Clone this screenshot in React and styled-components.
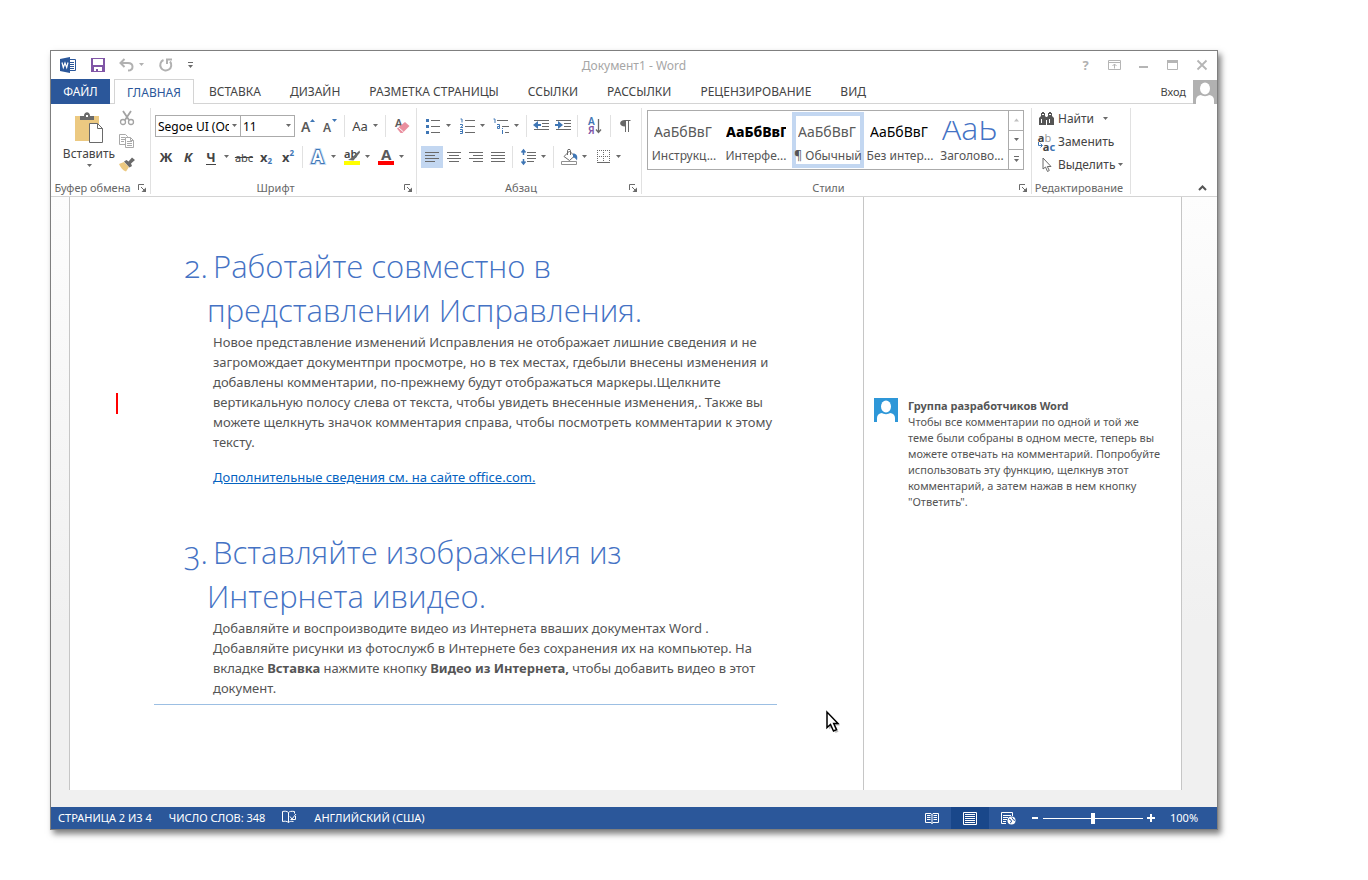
import React from 'react'
import styled, { createGlobalStyle, css } from 'styled-components';
import { useState } from 'react';

const tabs = ['ВСТАВКА', 'ДИЗАЙН', 'РАЗМЕТКА СТРАНИЦЫ', 'ССЫЛКИ', 'РАССЫЛКИ', 'РЕЦЕНЗИРОВАНИЕ', 'ВИД'];

const styleCells = [
    { name: 'Инструкц...', sample: 'АаБбВвГ', kind: 'plain' },
    { name: 'Интерфе...', sample: 'АаБбВвГ', kind: 'bold' },
    { name: '¶ Обычный', sample: 'АаБбВвГ', kind: 'plain' },
    { name: 'Без интер...', sample: 'АаБбВвГ', kind: 'dark' },
    { name: 'Заголово...', sample: 'АаЬ', kind: 'title' },
];

const GREY = '#6a6a6a';
const BLUE = '#3f76b5';

/* ---------- icons ---------- */

const Svg = ({ w = 16, h = 16, children }) => (
    <svg width={w} height={h} viewBox={`0 0 ${w} ${h}`} fill="none" aria-hidden="true">{children}</svg>
)

const Caret = ({ color = GREY }) => (
    <Svg w={7} h={4}><path d="M1 0h5L3.5 3z" fill={color} /></Svg>
)

const WordIcon = () => (
    <Svg w={17} h={16}>
        <path d="M9 2.5h6.500v11H9z" fill="#fff" stroke="#2b579a" />
        <path d="M10 5.5h4M10 7.5h4M10 9.5h4M10 11.5h4" stroke="#2b579a" />
        <path d="M0 2l10-2v16L0 14z" fill="#2b579a" />
        <path d="M2 5.500l1.300 5L5 6l1.700 4.500L8 5.500" stroke="#fff" strokeWidth="1.200" />
    </Svg>
)

const SaveIcon = () => (
    <Svg w={14} h={14}>
        <path d="M0 0h14v14H0z" fill="#8055a6" />
        <path d="M2 1h10v6H2zM3 9h8v4H3z" fill="#fff" />
        <path d="M5 11h2v3H5z" fill="#8055a6" />
    </Svg>
)

const UndoIcon = () => (
    <Svg w={15} h={14}>
        <path d="M2 5h7c3 0 4.500 1.600 4.500 3.700 0 2.300-1.800 3.800-4.500 3.800" stroke="#b1b1b1" strokeWidth="2" />
        <path d="M5.500 1L1.500 5l4 4" stroke="#b1b1b1" strokeWidth="2" />
    </Svg>
)

const RedoIcon = () => (
    <Svg w={14} h={14}>
        <path d="M4.500 2A5.500 5.500 0 1 0 11 3.500" stroke="#b1b1b1" strokeWidth="2" />
        <path d="M8 6V1.500h5" stroke="#b1b1b1" strokeWidth="2" />
    </Svg>
)

const MoreIcon = ({ color = GREY }) => (
    <Svg w={7} h={7}><path d="M1 .5h5" stroke={color} /><path d="M1 3h5L3.500 6z" fill={color} /></Svg>
)

const PersonIcon = ({ bg, size = 24 }) => (
    <svg width={size} height={size} viewBox="0 0 24 24" aria-hidden="true">
        <path d="M0 0h24v24H0z" fill={bg} />
        <ellipse cx="12" cy="8.500" rx="5" ry="6" fill="#fff" />
        <path d="M3 24v-4c0-3 2-4.500 5-5 1.500 1.500 6.500 1.500 8 0 3 .5 5 2 5 5v4z" fill="#fff" />
    </svg>
)

const PasteIcon = () => (
    <Svg w={29} h={31}>
        <path d="M0 4h24v25H0z" fill="#ecc981" />
        <path d="M5 8V4h4c0-5 6-5 6 0h4v4z" fill={GREY} />
        <path d="M11 3h2v2h-2z" fill="#fff" />
        <path d="M14.500 11.500h8l5 5v14h-13z" fill="#fff" stroke={GREY} />
        <path d="M22.500 11.500v5h5" stroke={GREY} />
    </Svg>
)

const CutIcon = () => (
    <Svg>
        <path d="M4 1l6 9M12 1L6 10" stroke="#a3a3a3" strokeWidth="1.800" />
        <circle cx="4" cy="12" r="2.500" stroke="#a3a3a3" strokeWidth="1.300" />
        <circle cx="12" cy="12" r="2.500" stroke="#a3a3a3" strokeWidth="1.300" />
    </Svg>
)

const CopyIcon = () => (
    <Svg>
        <path d="M.5 1.500h6l2 2v8h-8z" fill="#fff" stroke="#a9a9a9" />
        <path d="M2 4.500h4M2 6.500h4M2 8.500h3" stroke="#a9a9a9" />
        <path d="M6.500 4.500h5l3 3v7h-8z" fill="#fff" stroke="#a9a9a9" />
        <path d="M11.500 4.500v3h3M8 8.500h5M8 10.500h5M8 12.500h5" stroke="#a9a9a9" />
    </Svg>
)

const BrushIcon = () => (
    <Svg>
        <path d="M0 8l5-2 5 5-3 4.500C4 14.500 1.500 11.500 0 8z" fill="#ecc981" />
        <path d="M5 5.500L7.500 4l2 1.500L13 1.500 16 4l-4 3.500L13 10l-2.500 1.500z" fill={GREY} />
    </Svg>
)

const FontSizeIcon = ({ up }) => (
    <Svg w={16} h={16}>
        <Glyph x="1" y="14" $size={up ? 14 : 12} $weight={600}>A</Glyph>
        <path d={up ? 'M10 4h5l-2.500-3z' : 'M10 1h5l-2.500 3z'} fill={BLUE} />
    </Svg>
)

const EraserIcon = () => (
    <Svg>
        <Glyph x="1" y="9" $size={11} $weight={600}>A</Glyph>
        <path d="M3 10.500L11 4l4.500 4-7 7H6.500z" fill="#ea8f9f" />
        <path d="M4.500 9.500l5 4.500" stroke="#fff" />
    </Svg>
)

const TextFxIcon = () => (
    <Svg>
        <Glyph x="2" y="14" $size={17} $weight={600} stroke="#c6daf3" strokeWidth="4">A</Glyph>
        <Glyph x="2" y="14" $size={17} $weight={600} stroke={BLUE} strokeWidth="2">A</Glyph>
        <Glyph x="2" y="14" $size={17} $weight={600} $color="#fff">A</Glyph>
    </Svg>
)

const HighlightIcon = () => (
    <Svg>
        <path d="M0 12h16v4H0z" fill="#ff0" />
        <Glyph x="0" y="9" $size={11} $weight={600} $color="#444">ab</Glyph>
        <path d="M15.500 1.500L8 8.500l-4 2.500 5.500.5L16 3.500z" fill={GREY} />
    </Svg>
)

const FontColorIcon = () => (
    <Svg>
        <Glyph x="3" y="11" $size={15} $weight={700}>A</Glyph>
        <path d="M0 12h16v4H0z" fill="red" />
    </Svg>
)

const BulletsIcon = () => (
    <Svg w={14}>
        <path d="M0 1h3v3H0zM0 7h3v3H0zM0 13h3v3H0z" fill={BLUE} />
        <path d="M5 2.500h9M5 8.500h9M5 14.500h9" stroke={GREY} />
    </Svg>
)

const NumbersIcon = () => (
    <Svg w={15}>
        <path d="M.5 1H2v3.500M0 6.500h2.500v1.500L.5 9.500H3M0 11.500h2.500v4H0M0 13.500h2.500" stroke={BLUE} />
        <path d="M5 2.500h10M5 8.500h10M5 14.500h10" stroke={GREY} />
    </Svg>
)

const MultiIcon = () => (
    <Svg w={17}>
        <path d="M.5 1H2v4M4 6.500h2.500v4H4.500v-2h2M9.500 10v1M9.500 12v4" stroke={BLUE} />
        <path d="M4 2.500h11M9 8.500h7M12 14.500h4" stroke={GREY} />
    </Svg>
)

const IndentIcon = ({ right }) => (
    <Svg w={17} h={14}>
        <path d="M1 1.500h15M9 4.500h7M9 7.500h7M1 10.500h15" stroke={GREY} />
        <path d={right ? 'M0 5h3V2l5 4-5 4V7H0z' : 'M8 5H5V2L0 6l5 4V7h3z'} fill={BLUE} />
    </Svg>
)

const SortIcon = () => (
    <Svg w={15} h={18}>
        <Glyph x="1" y="8" $size={10} $weight={600} $color={BLUE}>А</Glyph>
        <Glyph x="1" y="17" $size={10} $weight={600} $color="#8055a6">Я</Glyph>
        <path d="M11.500 2v13M9 12.500l2.500 3 2.500-3" stroke={GREY} strokeWidth="1.300" />
    </Svg>
)

const PilcrowIcon = () => (
    <Svg w={12} h={14}>
        <path d="M5.500 1.500h6M6.500 1v12M9.500 1v12" stroke={GREY} />
        <path d="M6 1C-.5 1-.5 7.500 6 7.500z" fill={GREY} />
    </Svg>
)

const alignLines = {
    left: 'M0 1.500h14M0 4.500h10M0 7.500h14M0 10.500h10',
    center: 'M0 1.500h14M2 4.500h10M0 7.500h14M2 10.500h10',
    right: 'M0 1.500h14M4 4.500h10M0 7.500h14M4 10.500h10',
    justify: 'M0 1.500h14M0 4.500h14M0 7.500h14M0 10.500h14',
};

const AlignIcon = ({ kind }) => (
    <Svg w={14} h={12}><path d={alignLines[kind]} stroke={GREY} /></Svg>
)

const SpacingIcon = () => (
    <Svg w={15}>
        <path d="M2.500 1v5M.5 3.500l2-2.500 2 2.500M2.500 10v5M.5 12.500l2 2.500 2-2.500" stroke={BLUE} strokeWidth="1.500" />
        <path d="M6 3.500h9M6 6.500h9M6 9.500h9M6 12.500h7" stroke={GREY} />
    </Svg>
)

const ShadingIcon = () => (
    <Svg w={17} h={16}>
        <path d="M3 7.500L8.500 2l5 5-5 4.500z" stroke={GREY} />
        <path d="M6.500 6V1.500c0-1.500 3-1.500 3 0V6" stroke={GREY} />
        <path d="M12 4.500c3.500 0 5 2 4 7-1-1-1.500-3-4-3z" fill={BLUE} />
        <path d="M.5 12.500h15v3H.5z" fill="#fff" stroke="#909090" />
    </Svg>
)

const BordersIcon = () => (
    <Svg w={13} h={14}>
        <path d="M.5 0v12M6.500 0v12M12.500 0v12M0 .5h13M0 6.500h13" stroke={GREY} strokeDasharray="1 1" />
        <path d="M0 12.500h13" stroke={GREY} />
    </Svg>
)

const LauncherIcon = () => (
    <Svg w={8} h={8}>
        <path d="M.5 6V.5H6M3 3l4 4" stroke={GREY} />
        <path d="M8 3.500V8H3.500z" fill={GREY} />
    </Svg>
)

const FindIcon = () => (
    <Svg w={15} h={13}>
        <path d="M2 1h1V0h2v1h1v3l1 1v8H0V6l2-2zM9 1h1V0h2v1h1v3l2 2v7H8V5l1-1z" fill="#555" />
        <path d="M6 5h3v3H6z" fill="#555" />
        <path d="M2.500 7v4M10.500 7v4M3 2.500h2M10 2.500h2" stroke="#fff" />
    </Svg>
)

const SwapArrow = () => (
    <Svg w={5} h={6}><path d="M.5 0v3.500H4M2.500 1.500l2 2-2 2" stroke={BLUE} /></Svg>
)

const PointerIcon = () => (
    <Svg w={10} h={15}>
        <path d="M1 1v11l2.500-2 2 4.500 1.800-1-2-4H9z" fill="#fff" stroke={GREY} />
    </Svg>
)

const BookCheckIcon = () => (
    <Svg w={15} h={14}>
        <path d="M6.500 2.500C5 1 2.500 1 .5 1.500v10c2-.5 4.500-.5 6 1 1-1 2.500-1.500 5-1M6.500 2.500v10M6.500 2.500c1-1 2.500-1.500 6-1v2" stroke="#fff" />
        <path d="M8 6.500l2 2.500 4-5M8.500 9.500h5V6" stroke="#fff" />
    </Svg>
)

const ReadIcon = () => (
    <Svg w={14} h={13}>
        <path d="M.5 1.500h5.500l1 1 1-1h5.500v9H8l-1 1-1-1H.5zM7 2v10" stroke="#fff" />
        <path d="M2 3.500h3.500M2 5.500h3.500M2 7.500h3.500M8.500 3.500H12M8.500 5.500H12M8.500 7.500H12" stroke="#fff" />
    </Svg>
)

const PrintLayoutIcon = () => (
    <Svg w={14} h={13}>
        <path d="M.5.5h13v12H.5zM2 2.500h10M2 4.500h10M2 6.500h10M2 8.500h10M2 10.500h10" stroke="#fff" />
    </Svg>
)

const WebLayoutIcon = () => (
    <Svg w={15} h={13}>
        <path d="M5 11.500H.5V.5h11V4M2 3.500h8M2 5.500h5M2 7.500h4M2 9.500h3" stroke="#fff" />
        <circle cx="10.500" cy="8.500" r="4" fill="#fff" />
        <path d="M8 7l2 1 .5 2-1.500 1M11 5.500l1 2 2 1" stroke="#2b579a" />
    </Svg>
)

const MouseCursor = () => (
    <Svg w={18} h={26}>
        <path d="M2 2v15.500l3.500-3 3 6.500 3-1.300-2.800-6.200H13z" fill="#000" opacity=".25" transform="translate(2 2)" />
        <path d="M2 2v15.500l3.500-3 3 6.500 3-1.300-2.800-6.200H13z" fill="#fff" stroke="#000" strokeWidth="1.500" />
    </Svg>
)

/* ---------- parts ---------- */

const SplitTool = ({ label, children }) => (
    <Split aria-label={label}><SplitFace>{children}</SplitFace><Caret /></Split>
)

const ComboBox = ({ label, value, wide }) => {
    const [text, setText] = useState(value);
    return (
        <Combo $wide={wide}>
            <ComboInput aria-label={label} value={text} onChange={e => setText(e.target.value)} />
            <ComboButton aria-label={`${label}: список`}><Caret /></ComboButton>
        </Combo>
    )
}

const GroupFooter = ({ children, launcher = true }) => (
    <Footer>
        <FooterText>{children}</FooterText>
        {launcher && <Launcher aria-label={`Параметры: ${children}`}><LauncherIcon /></Launcher>}
    </Footer>
)

const TitleBar = () => (
    <Title>
        <QuickAccess>
            <WordIcon />
            <IconButton aria-label="Сохранить"><SaveIcon /></IconButton>
            <IconButton aria-label="Отменить"><UndoIcon /><Caret color="#b1b1b1" /></IconButton>
            <IconButton aria-label="Повторить"><RedoIcon /></IconButton>
            <IconButton aria-label="Настройка панели"><MoreIcon /></IconButton>
        </QuickAccess>
        <Caption>Документ1 - Word</Caption>
        <WindowButtons>
            <WinButton aria-label="Справка">?</WinButton>
            <WinButton aria-label="Параметры ленты">
                <Svg w={13} h={10}><path d="M.5.5h12v9H.5zM1 2.500h11" stroke="#b5b5b5" /><path d="M6.500 8.500V4M4.500 6l2-2 2 2" stroke="#b5b5b5" /></Svg>
            </WinButton>
            <WinButton aria-label="Свернуть"><Svg w={10} h={10}><path d="M0 7h9" stroke="#b5b5b5" strokeWidth="2" /></Svg></WinButton>
            <WinButton aria-label="Развернуть"><Svg w={11} h={10}><path d="M.5.5h10v9H.5z" stroke="#b5b5b5" /><path d="M0 1.500h11" stroke="#b5b5b5" strokeWidth="3" /></Svg></WinButton>
            <WinButton aria-label="Закрыть"><Svg w={10} h={10}><path d="M.5.5l9 9M9.500.5l-9 9" stroke="#b5b5b5" strokeWidth="1.800" /></Svg></WinButton>
        </WindowButtons>
    </Title>
)

const Ribbon = () => (
    <RibbonBar>
        <Group $w={100}>
            <Clipboard>
                <PasteButton><PasteIcon /><span>Вставить</span><Caret /></PasteButton>
                <ClipTools>
                    <IconButton aria-label="Вырезать"><CutIcon /></IconButton>
                    <IconButton aria-label="Копировать"><CopyIcon /></IconButton>
                    <IconButton aria-label="Формат по образцу"><BrushIcon /></IconButton>
                </ClipTools>
            </Clipboard>
            <GroupFooter>Буфер обмена</GroupFooter>
        </Group>
        <Group $w={266}>
            <Rows>
                <Row>
                    <ComboBox label="Шрифт" value="Segoe UI (Oc" wide />
                    <ComboBox label="Размер" value="11" />
                    <Gap />
                    <Tool aria-label="Увеличить размер"><FontSizeIcon up /></Tool>
                    <Tool aria-label="Уменьшить размер"><FontSizeIcon /></Tool>
                    <Sep />
                    <SplitTool label="Регистр">Aa</SplitTool>
                    <Sep />
                    <Tool aria-label="Очистить формат" $w={26}><EraserIcon /></Tool>
                </Row>
                <Row>
                    <Tool $bold>Ж</Tool>
                    <Tool $bold $italic>К</Tool>
                    <SplitTool label="Подчеркнутый"><Under>Ч</Under></SplitTool>
                    <Tool $small><s>abc</s></Tool>
                    <Tool $bold>x<Script $low>2</Script></Tool>
                    <Tool $bold>x<Script>2</Script></Tool>
                    <Sep />
                    <SplitTool label="Эффекты текста"><TextFxIcon /></SplitTool>
                    <SplitTool label="Цвет выделения"><HighlightIcon /></SplitTool>
                    <SplitTool label="Цвет текста"><FontColorIcon /></SplitTool>
                </Row>
            </Rows>
            <GroupFooter>Шрифт</GroupFooter>
        </Group>
        <Group $w={225}>
            <Rows>
                <Row>
                    <SplitTool label="Маркеры"><BulletsIcon /></SplitTool>
                    <SplitTool label="Нумерация"><NumbersIcon /></SplitTool>
                    <SplitTool label="Многоуровневый список"><MultiIcon /></SplitTool>
                    <Sep />
                    <Tool aria-label="Уменьшить отступ"><IndentIcon /></Tool>
                    <Tool aria-label="Увеличить отступ"><IndentIcon right /></Tool>
                    <Sep />
                    <Tool aria-label="Сортировка" $w={26}><SortIcon /></Tool>
                    <Sep />
                    <Tool aria-label="Все знаки"><PilcrowIcon /></Tool>
                </Row>
                <Row>
                    <Tool aria-label="По левому краю" $active><AlignIcon kind="left" /></Tool>
                    <Tool aria-label="По центру"><AlignIcon kind="center" /></Tool>
                    <Tool aria-label="По правому краю"><AlignIcon kind="right" /></Tool>
                    <Tool aria-label="По ширине"><AlignIcon kind="justify" /></Tool>
                    <Sep />
                    <SplitTool label="Интервал"><SpacingIcon /></SplitTool>
                    <Sep />
                    <SplitTool label="Заливка"><ShadingIcon /></SplitTool>
                    <SplitTool label="Границы"><BordersIcon /></SplitTool>
                </Row>
            </Rows>
            <GroupFooter>Абзац</GroupFooter>
        </Group>
        <Group $w={390}>
            <Gallery>
                {styleCells.map((cell, i) => (
                    <StyleCell key={i} $active={i === 2}>
                        <Sample $kind={cell.kind}>{cell.sample}</Sample>
                        <span>{cell.name}</span>
                    </StyleCell>
                ))}
                <GalleryScroll>
                    <ScrollButton aria-label="Вверх" disabled><Svg w={7} h={4}><path d="M1 3.500h5l-2.500-3z" fill="#c0c0c0" /></Svg></ScrollButton>
                    <ScrollButton aria-label="Вниз"><Caret /></ScrollButton>
                    <ScrollButton aria-label="Все стили"><MoreIcon /></ScrollButton>
                </GalleryScroll>
            </Gallery>
            <GroupFooter>Стили</GroupFooter>
        </Group>
        <Group $w={99}>
            <EditList>
                <EditButton><EditFace><FindIcon /></EditFace>Найти<FindCaret><Caret /></FindCaret></EditButton>
                <EditButton><EditFace><Swap><b>a<i>b</i></b><b><SwapArrow />a<em>c</em></b></Swap></EditFace>Заменить</EditButton>
                <EditButton><EditFace><PointerIcon /></EditFace>Выделить<Caret /></EditButton>
            </EditList>
            <GroupFooter launcher={false}>Редактирование</GroupFooter>
        </Group>
        <Collapse aria-label="Свернуть ленту"><Svg w={9} h={6}><path d="M1 5l3.500-3.500L8 5" stroke="#555" strokeWidth="2" /></Svg></Collapse>
    </RibbonBar>
)

const Document = () => (
    <Sheet>
        <Article>
            <Heading><Num>2.</Num>Работайте совместно в<br />представлении Исправления.</Heading>
            <Paragraph>
                Новое представление изменений Исправления не отображает лишние сведения и не<br />
                загромождает документпри просмотре, но в тех местах, гдебыли внесены изменения и<br />
                добавлены комментарии, по-прежнему будут отображаться маркеры.Щелкните<br />
                <Changed>вертикальную полосу слева от текста, чтобы увидеть внесенные изменения,. Также вы</Changed><br />
                можете щелкнуть значок комментария справа, чтобы посмотреть комментарии к этому<br />
                тексту.
            </Paragraph>
            <LinkLine><a href="#office">Дополнительные сведения см. на сайте office.com.</a></LinkLine>
            <Heading><Num>3.</Num>Вставляйте изображения из<br />Интернета ивидео.</Heading>
            <Paragraph>
                Добавляйте и воспроизводите видео из Интернета вваших документах Word .<br />
                Добавляйте рисунки из фотослужб в Интернете без сохранения их на компьютер. На<br />
                вкладке <b>Вставка</b> нажмите кнопку <b>Видео из Интернета,</b> чтобы добавить видео в этот<br />
                документ.
            </Paragraph>
            <Rule />
        </Article>
        <Comments>
            <PersonIcon bg="#2e97d8" />
            <div>
                <Author>Группа разработчиков Word</Author>
                <CommentText>
                    Чтобы все комментарии по одной и той же<br />
                    теме были собраны в одном месте, теперь вы<br />
                    можете отвечать на комментарий. Попробуйте<br />
                    использовать эту функцию, щелкнув этот<br />
                    комментарий, а затем нажав в нем кнопку<br />
                    "Ответить".
                </CommentText>
            </div>
        </Comments>
    </Sheet>
)

const StatusBar = () => {
    const [zoom, setZoom] = useState(100);
    return (
        <Status>
            <StatusItem>СТРАНИЦА 2 ИЗ 4</StatusItem>
            <StatusItem>ЧИСЛО СЛОВ: 348</StatusItem>
            <StatusItem aria-label="Правописание"><BookCheckIcon /></StatusItem>
            <StatusItem>АНГЛИЙСКИЙ (США)</StatusItem>
            <Spacer />
            <ViewButton aria-label="Режим чтения"><ReadIcon /></ViewButton>
            <ViewButton aria-label="Разметка страницы" $active><PrintLayoutIcon /></ViewButton>
            <ViewButton aria-label="Веб-документ"><WebLayoutIcon /></ViewButton>
            <ZoomButton aria-label="Уменьшить"><Svg w={8} h={8}><path d="M1 4h6" stroke="#fff" strokeWidth="2" /></Svg></ZoomButton>
            <ZoomRange type="range" aria-label="Масштаб" min="0" max="200" value={zoom} onChange={e => setZoom(Number(e.target.value))} />
            <ZoomButton aria-label="Увеличить"><Svg w={8} h={8}><path d="M0 4h8M4 0v8" stroke="#fff" strokeWidth="2" /></Svg></ZoomButton>
            <Percent>{zoom}%</Percent>
        </Status>
    )
}

const App = () => (
    <Desk>
        <GlobalStyle />
        <Window>
            <TitleBar />
            <TabBar>
                <FileTab>ФАЙЛ</FileTab>
                <ActiveTab>ГЛАВНАЯ</ActiveTab>
                {tabs.map(tab => <Tab key={tab}>{tab}</Tab>)}
                <Spacer />
                <SignIn>Вход<PersonIcon bg="#b1b1b1" /></SignIn>
            </TabBar>
            <Ribbon />
            <Workspace><Document /></Workspace>
            <StatusBar />
            <Pointer><MouseCursor /></Pointer>
        </Window>
    </Desk>
)

/* ---------- styles ---------- */

const GlobalStyle = createGlobalStyle`
    *{
        box-sizing: border-box;
    }
    body{
        margin: 0;
        background: #fff;
    }
    body, button, input{
        font-family: "Noto Sans", "Open Sans", sans-serif;
        font-size: 12px;
        color: #444;
    }
    button{
        padding: 0;
        border: 0;
        background: none;
        white-space: nowrap;
    }
    svg{
        display: block;
        flex: none;
        overflow: visible;
    }
`;
const Glyph = styled.text`
    font-size: ${p => p.$size}px;
    font-weight: ${p => p.$weight};
    fill: ${p => p.$color || '#5a5a5a'};
`;
const Desk = styled.div`
    padding: 50px 150px 50px 50px;
`;
const Window = styled.div`
    position: relative;
    min-width: 1100px;
    background: #fff;
    border: 1px solid #7f7f7f;
    box-shadow: 3px 4px 6px rgba(0, 0, 0, 0.5);
`;
const center = css`
    display: flex;
    align-items: center;
    justify-content: center;
`;
const Spacer = styled.div`
    flex: 1;
`;
const Title = styled.header`
    display: grid;
    grid-template-columns: 1fr auto 1fr;
    align-items: center;
    height: 28px;
`;
const QuickAccess = styled.div`
    display: flex;
    align-items: center;
    gap: 14px;
    padding-left: 9px;
`;
const IconButton = styled.button`
    ${center}
    gap: 4px;
`;
const Caption = styled.div`
    color: #a6a6a6;
`;
const WindowButtons = styled.div`
    display: flex;
    justify-content: flex-end;
    padding-right: 1px;
`;
const WinButton = styled.button`
    ${center}
    width: 29px;
    height: 20px;
    color: #b1b1b1;
    font-weight: bold;
    font-size: 13px;
`;
const TabBar = styled.nav`
    display: flex;
    height: 25px;
    box-shadow: inset 0 -1px #d4d4d4;
`;
const Tab = styled.button`
    padding: 0 14px 1px 15px;
`;
const FileTab = styled(Tab)`
    width: 59px;
    padding: 0;
    margin-right: 4px;
    background: #2b579a;
    color: #fff;
`;
const ActiveTab = styled(Tab)`
    min-width: 80px;
    padding: 0;
    background: #fff;
    border: 1px solid #d4d4d4;
    border-bottom: 0;
    color: #2b579a;
`;
const SignIn = styled.button`
    display: flex;
    align-items: center;
    gap: 7px;
    font-size: 11px;
`;
const RibbonBar = styled.div`
    display: flex;
    padding: 4px 0 2px;
    border-bottom: 1px solid #d4d4d4;
`;
const Group = styled.section`
    display: flex;
    flex-direction: column;
    width: ${p => p.$w}px;
    height: 86px;
    border-right: 1px solid #e1e1e1;
`;
const Footer = styled.div`
    display: flex;
    align-items: center;
    height: 12px;
    margin-top: auto;
    padding: 0 4px 0 0;
    font-size: 11px;
    color: #666;
`;
const FooterText = styled.span`
    flex: 1;
    text-align: center;
    line-height: 12px;
    white-space: nowrap;
`;
const Launcher = styled.button`
    margin-left: 4px;
`;
const Clipboard = styled.div`
    display: flex;
    gap: 5px;
    padding: 2px 0 0 13px;
`;
const PasteButton = styled.button`
    display: flex;
    flex-direction: column;
    align-items: center;
    width: 50px;
    gap: 2px;
    padding-top: 2px;
`;
const ClipTools = styled.div`
    display: flex;
    flex-direction: column;
    gap: 7px;
`;
const Rows = styled.div`
    display: flex;
    flex-direction: column;
    gap: 9px;
    padding: 7px 0 0 4px;
`;
const Row = styled.div`
    display: flex;
    height: 22px;
`;
const Gap = styled.span`
    width: 2px;
`;
const Sep = styled.span`
    width: 1px;
    margin: 0 3px;
    background: #e1e1e1;
`;
const Tool = styled.button`
    ${center}
    width: ${p => p.$w || 22}px;
    font-size: ${p => p.$small ? 11 : 13}px;
    font-weight: ${p => p.$bold ? 'bold' : 'normal'};
    font-style: ${p => p.$italic ? 'italic' : 'normal'};
    background: ${p => p.$active ? '#c3d7f1' : 'none'};
`;
const Under = styled.b`
    border-bottom: 1px solid #444;
    line-height: 14px;
`;
const Script = styled.span`
    align-self: ${p => p.$low ? 'flex-end' : 'flex-start'};
    padding: 3px 0;
    font-size: 8px;
    line-height: 8px;
    color: ${BLUE};
`;
const Split = styled.button`
    display: flex;
    align-items: center;
    width: 34px;
`;
const SplitFace = styled.span`
    ${center}
    width: 24px;
    font-size: 13px;
`;
const Combo = styled.div`
    display: flex;
    width: ${p => p.$wide ? 86 : 55}px;
    margin-right: ${p => p.$wide ? -1 : 0}px;
    border: 1px solid #ababab;
`;
const ComboInput = styled.input`
    flex: 1;
    min-width: 0;
    border: 0;
    padding: 0 0 0 2px;
    color: #000;
`;
const ComboButton = styled.button`
    ${center}
    width: 11px;
`;
const Gallery = styled.div`
    display: flex;
    height: 60px;
    margin: 2px 7px 0 5px;
    border: 1px solid #ababab;
`;
const StyleCell = styled.button`
    display: flex;
    flex-direction: column;
    align-items: center;
    flex: 1;
    min-width: 0;
    margin: 1px 0;
    border: 4px solid ${p => p.$active ? '#c3d7f1' : 'transparent'};
    color: #555;
    white-space: nowrap;
    padding-top: 5px;
    gap: 6px;
    line-height: 16px;
`;
const sampleLook = {
    plain: css`color: #5a5a5a;`,
    bold: css`color: #000; font-weight: 800;`,
    dark: css`color: #000;`,
    title: css`
        color: #4472c4;
        font-family: "Open Sans", "Noto Sans", sans-serif;
        font-size: 32px;
        font-weight: 300;
        line-height: 14px;
    `,
};
const Sample = styled.span`
    width: 60px;
    height: 22px;
    overflow: hidden;
    text-align: left;
    line-height: 22px;
    font-size: 14px;
    ${p => sampleLook[p.$kind]}
`;
const GalleryScroll = styled.div`
    display: flex;
    flex-direction: column;
    width: 15px;
    border-left: 1px solid #ababab;
`;
const ScrollButton = styled.button`
    ${center}
    flex: 1;
    & + &{
        border-top: 1px solid #ababab;
    }
`;
const EditList = styled.div`
    display: flex;
    flex-direction: column;
    padding-left: 5px;
`;
const EditButton = styled.button`
    display: flex;
    align-items: center;
    height: 23px;
    gap: 2px;
    padding-bottom: 2px;
`;
const EditFace = styled.span`
    ${center}
    width: 19px;
`;
const FindCaret = styled.span`
    margin-left: 6px;
`;
const Swap = styled.span`
    display: flex;
    flex-direction: column;
    font-size: 11px;
    line-height: 9px;
    b{
        display: flex;
    }
    i{
        font-style: normal;
        font-weight: normal;
        color: #999;
    }
    em{
        font-style: normal;
        color: ${BLUE};
    }
`;
const Collapse = styled.button`
    align-self: flex-end;
    margin: 0 10px 3px auto;
`;
const Workspace = styled.main`
    padding: 0 35px 17px 18px;
    background: linear-gradient(#fdfdfd, #f0f0f0 70%);
`;
const Sheet = styled.div`
    display: flex;
    min-height: 593px;
    background: #fff;
    border: solid #c6c6c6;
    border-width: 0 1px;
`;
const Article = styled.article`
    flex: 1;
    padding: 47px 86px 0 84px;
    white-space: nowrap;
`;
const Heading = styled.h1`
    margin: 0;
    padding-left: 53px;
    font-family: "Open Sans", "Noto Sans", sans-serif;
    font-size: 31px;
    line-height: 44px;
    font-weight: 300;
    color: #4472c4;
    text-indent: -23px;
`;
const Num = styled.span`
    display: inline-block;
    width: 29px;
    text-indent: 0;
    font-variant-numeric: oldstyle-nums;
`;
const Paragraph = styled.p`
    margin: 0;
    padding-left: 59px;
    font-size: 13px;
    line-height: 20px;
    color: #555;
`;
const Changed = styled.span`
    position: relative;
    &::before{
        content: "";
        position: absolute;
        left: -97px;
        top: 0;
        width: 2px;
        height: 21px;
        background: red;
    }
`;
const LinkLine = styled(Paragraph)`
    margin: 15px 0 43px;
    a{
        color: #0563c1;
    }
`;
const Rule = styled.hr`
    margin: 6px 0 0;
    border: 0;
    border-top: 1px solid #9cbfe3;
`;
const Comments = styled.aside`
    display: flex;
    gap: 10px;
    width: 318px;
    padding: 201px 0 0 10px;
    border-left: 1px solid #c6c6c6;
    font-size: 11px;
    line-height: 16px;
    color: #555;
    white-space: nowrap;
`;
const Author = styled.div`
    font-weight: bold;
`;
const CommentText = styled.p`
    margin: 0;
`;
const Status = styled.footer`
    display: flex;
    align-items: center;
    height: 22px;
    padding-left: 7px;
    background: #2b579a;
    color: #fff;
`;
const StatusItem = styled.button`
    margin-right: 17px;
    padding-bottom: 2px;
    color: #fff;
    font-size: 11px;
`;
const ViewButton = styled.button`
    ${center}
    width: 38px;
    height: 22px;
    background: ${p => p.$active ? '#19478a' : 'none'};
`;
const ZoomButton = styled.button`
    margin: 0 4px;
`;
const ZoomRange = styled.input`
    appearance: none;
    width: 100px;
    height: 12px;
    margin: 0;
    background: linear-gradient(#fff, #fff) center / 100% 1px no-repeat;
    &::-webkit-slider-thumb{
        appearance: none;
        width: 4px;
        height: 11px;
        background: #fff;
    }
`;
const Percent = styled.span`
    width: 58px;
    padding: 0 0 2px 11px;
    font-size: 11px;
`;
const Pointer = styled.div`
    position: absolute;
    left: 774px;
    top: 659px;
    pointer-events: none;
`;

export default App
